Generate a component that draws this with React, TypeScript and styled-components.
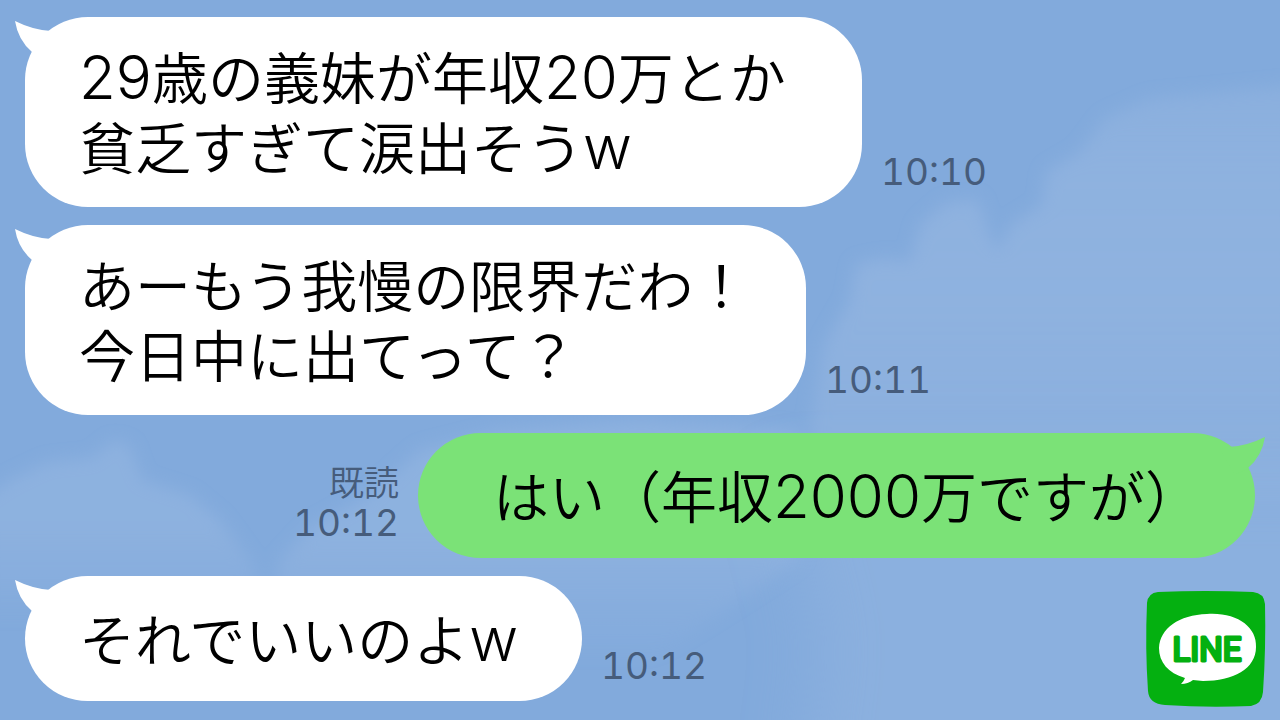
import React from "react";
import styled, { createGlobalStyle } from "styled-components";

const GlobalStyle = createGlobalStyle`
  *, *::before, *::after { box-sizing: border-box; }
  body { margin: 0; background: #82aadc; }
`;

const Page = styled.main`
  position: relative;
  min-height: 100vh;
  padding: 17px 25px;
  overflow: hidden;
  background: #82aadc;
  font-family: "Noto Sans CJK JP", sans-serif;
`;

const Sky = styled.svg`
  position: absolute;
  inset: 0;
  width: 100%;
  height: 100%;
`;

const Thread = styled.ol`
  position: relative;
  display: flex;
  flex-direction: column;
  gap: 18px;
  margin: 0;
  padding: 0;
  list-style: none;
`;

const Row = styled.li<{ $mine: boolean }>`
  display: flex;
  flex-direction: ${(p) => (p.$mine ? "row-reverse" : "row")};
  align-items: flex-end;
  gap: 19px;
`;

const Bubble = styled.div<{ $mine: boolean; $columns: number }>`
  position: relative;
  display: flex;
  flex-direction: column;
  justify-content: center;
  width: calc(${(p) => p.$columns}em + 109px);
  min-height: 125px;
  padding: 23px 54px 27px;
  border-radius: 63px;
  background: ${(p) => (p.$mine ? "#7be277" : "#ffffff")};
  color: #000;
  font-size: 56px;
  font-weight: 350;
  line-height: 70px;
  text-align: ${(p) => (p.$mine ? "right" : "left")};
  white-space: nowrap;
`;

const Tail = styled.svg<{ $mine: boolean }>`
  position: absolute;
  top: 4px;
  ${(p) => (p.$mine ? "right: -10px; transform: scaleX(-1);" : "left: -10px;")}
  width: 44px;
  height: 38px;
  fill: ${(p) => (p.$mine ? "#7be277" : "#ffffff")};
`;

const Line = styled.p`
  margin: 0;
`;

const Latin = styled.span`
  font-family: Inter, sans-serif;
  font-size: 60px;
  font-weight: 300;
  line-height: 1;
`;

const Meta = styled.div<{ $mine: boolean }>`
  display: flex;
  flex-direction: column;
  align-items: ${(p) => (p.$mine ? "flex-end" : "flex-start")};
  padding-bottom: 14px;
  color: #465c7b;
  font-size: 35px;
  line-height: 42px;
`;

const Read = styled.span`
  font-weight: 350;
`;

const Time = styled.time`
  font-family: Inter, sans-serif;
  font-size: 37px;
  font-variant-numeric: tabular-nums;
`;

const Logo = styled.svg`
  position: absolute;
  right: 14px;
  bottom: 11px;
  width: 121px;
  height: 119px;
`;

type Message = {
  lines: string[];
  time: string;
  columns: number;
  mine?: boolean;
  read?: boolean;
};

const messages: Message[] = [
  { lines: ["29歳の義妹が年収20万とか", "貧乏すぎて涙出そうw"], time: "10:10", columns: 13 },
  { lines: ["あーもう我慢の限界だわ！", "今日中に出てって？"], time: "10:11", columns: 12 },
  { lines: ["はい（年収2000万ですが）"], time: "10:12", columns: 13, mine: true, read: true },
  { lines: ["それでいいのよw"], time: "10:12", columns: 8 },
];

const splitLatin = (text: string) =>
  text
    .split(/([0-9a-z]+)/)
    .map((part, i) => (i % 2 ? <Latin key={i}>{part}</Latin> : part));

function Clouds() {
  return (
    <Sky viewBox="0 0 1280 720" preserveAspectRatio="none" aria-hidden="true">
      <defs>
        <filter id="soft" x="-10%" y="-10%" width="120%" height="120%">
          <feGaussianBlur stdDeviation="8" />
        </filter>
        <linearGradient id="fade" x1="0" y1="0" x2="0" y2="1">
          <stop offset="0" stopColor="#92b4e0" stopOpacity="0.5" />
          <stop offset="0.2" stopColor="#92b4e0" stopOpacity="0.75" />
          <stop offset="0.5" stopColor="#92b4e0" stopOpacity="0.8" />
          <stop offset="1" stopColor="#8fb2df" stopOpacity="0.6" />
        </linearGradient>
        <linearGradient id="fadeLow" x1="0" y1="0" x2="0" y2="1">
          <stop offset="0" stopColor="#92b4e0" stopOpacity="0.7" />
          <stop offset="0.5" stopColor="#92b4e0" stopOpacity="0.7" />
          <stop offset="1" stopColor="#92b4e0" stopOpacity="0" />
        </linearGradient>
        <filter id="softer" x="-30%" y="-30%" width="160%" height="160%">
          <feGaussianBlur stdDeviation="30" />
        </filter>
      </defs>
      <g filter="url(#soft)">
        <path
          fill="url(#fade)"
          d="M810 430 L824 345 L850 300 L856 264 L885 258 L910 262 L920 225 L945 203 L978 199 L990 235 L998 252 L1010 225 L1042 205 L1046 172 L1080 152 L1105 118 L1150 98 L1220 92 L1300 84 V500 H810 Z"
        />
        <path
          fill="url(#fadeLow)"
          d="M-20 500 L10 480 L48 462 L92 458 L114 440 L130 446 L142 480 L190 495 L220 520 L250 560 L275 620 H-20 Z"
        />
        <path
          fill="url(#fadeLow)"
          d="M262 660 L280 560 L310 528 L370 495 L420 450 L500 430 L640 420 L800 430 V560 L650 660 Z"
        />
      </g>
      <path
        filter="url(#softer)"
        fill="#8fb2df"
        fillOpacity="0.7"
        d="M780 480 H1360 V800 H800 L820 640 Z"
      />
    </Sky>
  );
}

function LineLogo() {
  return (
    <Logo viewBox="0 0 121 119" role="img" aria-label="LINE">
      <path
        fill="#04b010"
        d="M13 2 Q60 0 108 2 Q119 3 120 14 Q121 58 118 102 Q117 114 106 116 Q62 118 20 115 Q4 114 3 101 Q0 58 2 13 Q3 3 13 2 Z"
      />
      <path
        fill="#fff"
        d="M62 24 C92 22 112 37 111 57 C111 79 88 91 58 91 L48 90 Q43 94 36 94 Q39 91 40 88 C23 83 14 72 14 58 C15 38 34 25 62 24 Z"
      />
      <text
        x="62"
        y="71"
        textAnchor="middle"
        fontFamily="Roboto, sans-serif"
        fontSize="33"
        fontWeight="400"
        fill="#04b010"
        stroke="#04b010"
        strokeWidth="3"
        strokeLinejoin="round"
      >
        LINE
      </text>
    </Logo>
  );
}

export default function App() {
  return (
    <Page>
      <GlobalStyle />
      <Clouds />
      <Thread>
        {messages.map((m, i) => (
          <Row key={i} $mine={!!m.mine}>
            <Bubble $mine={!!m.mine} $columns={m.columns}>
              <Tail $mine={!!m.mine} viewBox="0 0 44 38" aria-hidden="true">
                <path d="M0 0 Q18 9 36 10 L44 14 L30 38 L17 31 Q3 19 0 0 Z" />
              </Tail>
              {m.lines.map((line) => (
                <Line key={line}>{splitLatin(line)}</Line>
              ))}
            </Bubble>
            <Meta $mine={!!m.mine}>
              {m.read && <Read>既読</Read>}
              <Time>{m.time}</Time>
            </Meta>
          </Row>
        ))}
      </Thread>
      <LineLogo />
    </Page>
  );
}
